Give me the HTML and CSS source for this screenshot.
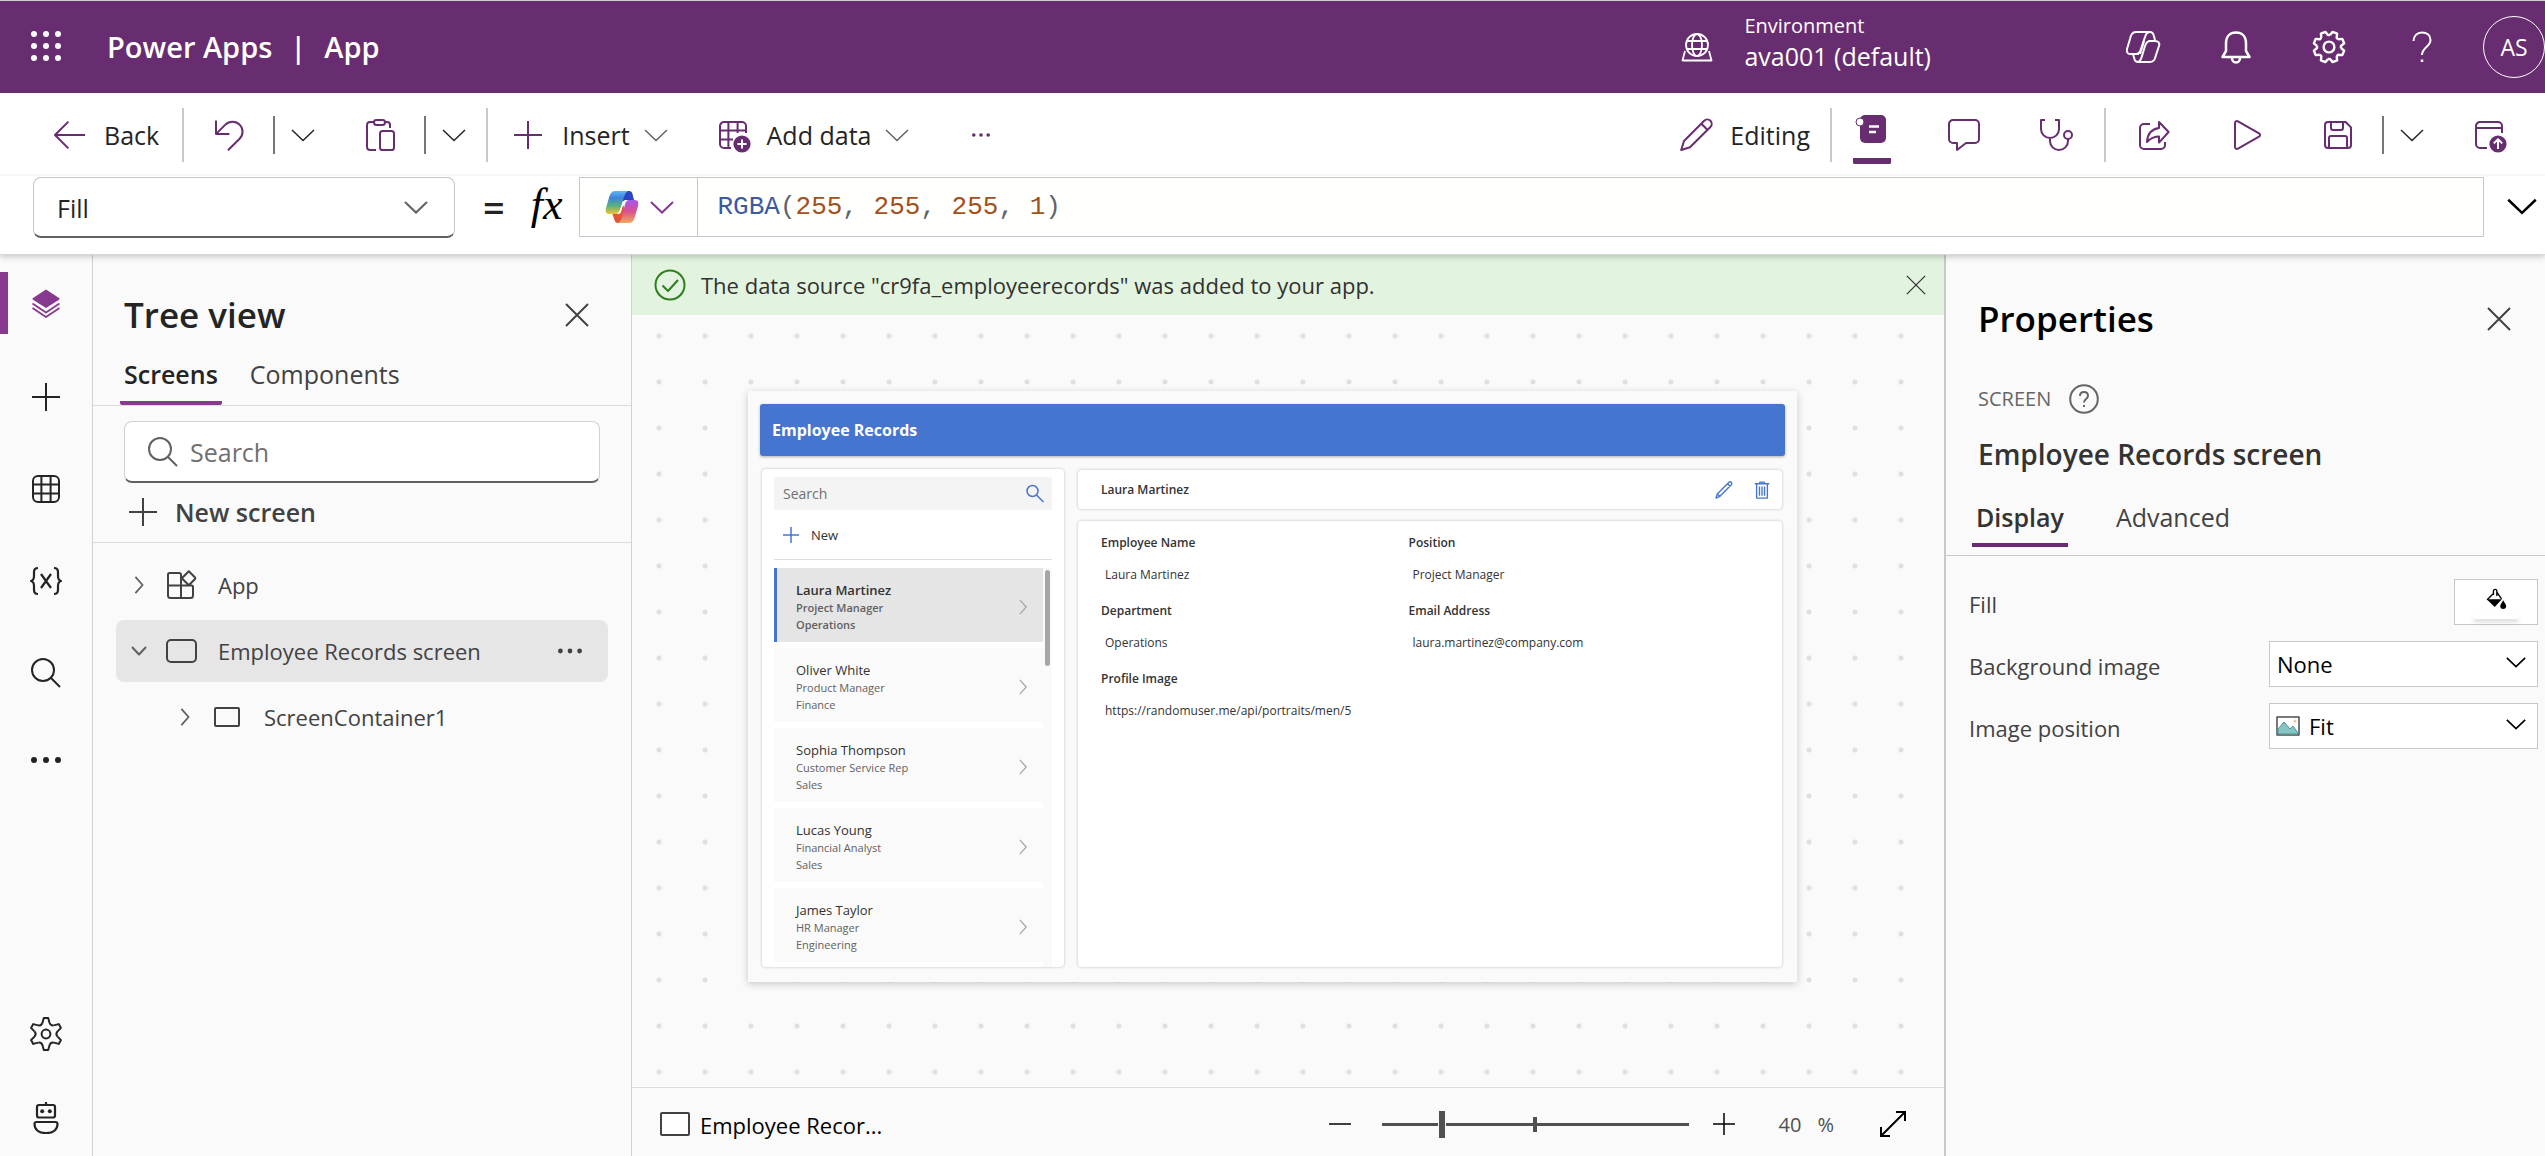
FILE: index.html
```html
<!DOCTYPE html>
<html lang="en">
<head>
<meta charset="utf-8">
<title>Power Apps | App</title>
<meta name="viewport" content="width=device-width, initial-scale=1">
<link rel="stylesheet" href="styles.css">
</head>
<body>
<svg class="sprite" aria-hidden="true">
  <symbol id="chev-down" viewBox="0 0 24 14"><path d="M1 2l11 10.500L23 2"/></symbol>
  <symbol id="chev-right" viewBox="0 0 10 20"><path d="M1 1l8 9-8 9"/></symbol>
  <symbol id="close" viewBox="0 0 24 24"><path d="M1 1l22 22M23 1L1 23"/></symbol>
  <symbol id="plus" viewBox="0 0 20 20"><path d="M10 3v14M3 10h14"/></symbol>
  <symbol id="search" viewBox="0 0 20 20"><circle cx="8.500" cy="8.500" r="5.500"/><path d="M12.500 12.500L17 17"/></symbol>
  <symbol id="dots" viewBox="0 0 20 20"><g class="solid"><circle cx="4" cy="10" r="1.500"/><circle cx="10" cy="10" r="1.500"/><circle cx="16" cy="10" r="1.500"/></g></symbol>
  <symbol id="pencil" viewBox="0 0 20 20"><path d="M17.200 2.900a2.200 2.200 0 0 0-3.100 0L4 13l-1.400 4.500L7 16.100 17.200 6a2.200 2.200 0 0 0 0-3.100zM12.700 4.400l3.100 3.100"/></symbol>
  <symbol id="tooth" viewBox="0 0 20 20"><path d="M15.700 8.200L17.700 8.800V11.200L15.700 11.800L15.300 12.800"/></symbol>
</svg>

<header class="top">
  <button class="plain waffle" aria-label="App launcher">
    <svg class="i40" viewBox="0 0 40 40"><g class="solid"><circle cx="8" cy="7" r="3"/><circle cx="20" cy="7" r="3"/><circle cx="32" cy="7" r="3"/><circle cx="8" cy="19" r="3"/><circle cx="20" cy="19" r="3"/><circle cx="32" cy="19" r="3"/><circle cx="8" cy="31" r="3"/><circle cx="20" cy="31" r="3"/><circle cx="32" cy="31" r="3"/></g></svg>
  </button>
  <div class="brand"><a href="#">Power Apps</a><span>|</span><span>App</span></div>
  <button class="plain env">
    <svg class="i40" viewBox="0 0 40 40"><g stroke-width="1.800"><circle cx="20" cy="18" r="11"/><ellipse cx="20" cy="18" rx="5" ry="11"/><path d="M10 14h20M10 22h20M8 24L5.500 33.500h29L32 24"/></g></svg>
    <span class="env-text"><small>Environment</small><b>ava001 (default)</b></span>
  </button>
  <nav class="top-icons" aria-label="Global">
    <button class="plain" aria-label="Copilot"><svg class="i40" viewBox="0 0 40 40"><g stroke-width="2"><path d="M13 5h14c2 0 3 1 3.600 3L32 13M13 5C9 5 8 8 7 12L4 22c-1 3.500 1 5 4 5h3M13 27c3 0 4-2 5-5l4-12c1-3.500 3-5 5-5"/><path d="M27 35H15c-2 0-3-1-3.600-3L10 27h6M27 35c4 0 5-3 6-7l3-9c1-3.500-1-5-4-5h-5c-3 0-4 2-5 5l-3 10c-1 4-2 6-5 6M21 14l-4 13"/></g></svg></button>
    <button class="plain" aria-label="Notifications"><svg class="i40" viewBox="0 0 40 40"><g stroke-width="2.500"><path d="M20 5.500c-6.500 0-10 4.500-10 10.500v8L6.500 30h27L30 24v-8c0-6-3.500-10.500-10-10.500z"/><path d="M16 31c0 2.500 1.500 4.500 4 4.500s4-2 4-4.500"/></g></svg></button>
    <button class="plain" aria-label="Settings"><svg class="i40" viewBox="0 0 20 20"><g stroke-width="1.200"><g transform="rotate(22.500 10 10)"><use href="#tooth"/><use href="#tooth" transform="rotate(45 10 10)"/><use href="#tooth" transform="rotate(90 10 10)"/><use href="#tooth" transform="rotate(135 10 10)"/><use href="#tooth" transform="rotate(180 10 10)"/><use href="#tooth" transform="rotate(225 10 10)"/><use href="#tooth" transform="rotate(270 10 10)"/><use href="#tooth" transform="rotate(315 10 10)"/></g><circle cx="10" cy="10" r="2.700"/></g></svg></button>
    <button class="plain" aria-label="Help"><svg class="i40" viewBox="0 0 40 40"><path stroke-width="2" d="M11.500 14c0-5 3.500-8.500 8.500-8.500s8.500 3 8.500 7.500c0 7-8.500 7-8.500 15"/><path stroke-width="2.500" d="M20 32.500V35"/></svg></button>
  </nav>
  <button class="plain avatar" aria-label="Account">AS</button>
</header>

<div class="toolbar" role="toolbar" aria-label="Commands">
  <button class="plain cmd"><svg class="i40" viewBox="0 0 20 20"><path d="M17.500 10H2.700M9.200 3.300L2.500 10l6.700 6.700"/></svg>Back</button>
  <span class="sep"></span>
  <button class="plain" aria-label="Undo"><svg class="i40" viewBox="0 0 20 20"><path d="M3.500 2.800v6.700h6.700M3.800 9.200l4.400-4.400a5 5 0 0 1 7.100 7.100L9.500 17.600"/></svg></button>
  <span class="line"></span>
  <button class="plain" aria-label="Undo options"><svg class="chev"><use href="#chev-down"/></svg></button>
  <button class="plain gap-l" aria-label="Paste"><svg class="i40" viewBox="0 0 20 20"><path d="M7 3.500H5a1.500 1.500 0 0 0-1.500 1.500v11A1.500 1.500 0 0 0 5 17.500h3M12.500 3.500h1A1.500 1.500 0 0 1 15 5v1.500"/><rect x="7" y="2.500" width="5.500" height="2.500" rx="1.200"/><rect x="10" y="8" width="7" height="9.500" rx="1.300"/></svg></button>
  <span class="line"></span>
  <button class="plain" aria-label="Paste options"><svg class="chev"><use href="#chev-down"/></svg></button>
  <span class="sep tight"></span>
  <button class="plain cmd"><svg class="i40"><use href="#plus"/></svg>Insert<svg class="chev gray"><use href="#chev-down"/></svg></button>
  <button class="plain cmd gap-l"><svg class="i40" viewBox="0 0 20 20"><path d="M16.500 9V5.500A2 2 0 0 0 14.500 3.500h-9A2 2 0 0 0 3.500 5.500v9a2 2 0 0 0 2 2H9M3.500 7.700h13M3.500 12.200H10M7.700 3.500v13M12.300 3.500V9"/><circle class="solid" cx="14.500" cy="14.500" r="4.300"/><path class="knock" d="M14.500 12.200v4.600M12.200 14.500h4.600"/></svg>Add data<svg class="chev gray"><use href="#chev-down"/></svg></button>
  <button class="plain dots wide" aria-label="More commands"><svg class="i24"><use href="#dots"/></svg></button>
  <span class="grow"></span>
  <button class="plain cmd"><svg class="i40"><use href="#pencil"/></svg>Editing</button>
  <span class="sep tight"></span>
  <button class="plain active-panel" aria-label="Properties panel"><svg class="i40" viewBox="0 0 40 40"><rect class="solid" x="8" y="6" width="26" height="28" rx="5"/><path class="knock" stroke-width="2.500" d="M17 17.500h10M17 23h7"/><circle class="ring" cx="8" cy="13" r="4"/></svg></button>
  <button class="plain wide" aria-label="Comments"><svg class="i40" viewBox="0 0 20 20"><path d="M4.500 2.500h11a2 2 0 0 1 2 2V12a2 2 0 0 1-2 2H11l-4.500 3.500V14h-2a2 2 0 0 1-2-2V4.500a2 2 0 0 1 2-2z"/></svg></button>
  <button class="plain wide" aria-label="App checker"><svg class="i40" viewBox="0 0 20 20"><path d="M4.500 2.500H2.500V7a4.500 4.500 0 0 0 9 0V2.500h-2M7 11.500v1.500a4.500 4.500 0 0 0 9 0v-1"/><circle cx="16" cy="10" r="2"/></svg></button>
  <span class="sep roomy"></span>
  <button class="plain" aria-label="Share"><svg class="i40" viewBox="0 0 20 20"><path d="M8 4.500H5a2 2 0 0 0-2 2V15a2 2 0 0 0 2 2h8.500a2 2 0 0 0 2-2v-1.500M12.500 3.500v3C9 7 6.700 9.500 6.500 13.500c2-2 3.500-2.700 6-2.700v3L17.300 8.500z"/></svg></button>
  <button class="plain wide" aria-label="Preview"><svg class="i40" viewBox="0 0 20 20"><path d="M4.500 4v12c0 .8.800 1.200 1.500.8l10.500-6c.7-.4.700-1.200 0-1.600L6 3.200C5.300 2.800 4.500 3.200 4.500 4z"/></svg></button>
  <button class="plain wide" aria-label="Save"><svg class="i40" viewBox="0 0 20 20"><path d="M5 3.500h8.800l2.700 2.700V15a1.500 1.500 0 0 1-1.500 1.500H5A1.500 1.500 0 0 1 3.500 15V5A1.500 1.500 0 0 1 5 3.500zM6.500 3.500v3a1 1 0 0 0 1 1h4a1 1 0 0 0 1-1v-3M5.500 16.500v-5a1 1 0 0 1 1-1h7a1 1 0 0 1 1 1v5"/></svg></button>
  <span class="line"></span>
  <button class="plain" aria-label="Save options"><svg class="chev"><use href="#chev-down"/></svg></button>
  <button class="plain gap-l" aria-label="Publish"><svg class="i40" viewBox="0 0 20 20"><path d="M9 16.500H5.500a2 2 0 0 1-2-2v-9a2 2 0 0 1 2-2h9a2 2 0 0 1 2 2V9M3.500 6.500h13"/><circle class="solid" cx="14.500" cy="14.500" r="4.300"/><path class="knock" d="M14.500 17v-4.800M12.400 14.200l2.100-2.100 2.100 2.100"/></svg></button>
</div>

<div class="formula">
  <div class="picker property">
    <select aria-label="Property"><option>Fill</option></select>
    <svg class="chev gray"><use href="#chev-down"/></svg>
  </div>
  <span class="equals">=</span>
  <span class="fx">fx</span>
  <div class="formula-box">
    <button class="plain copilot" aria-label="Copilot">
      <svg class="i40" viewBox="0 0 40 40">
        <defs>
          <linearGradient id="g1" x1="0" y1="0" x2="0" y2="1"><stop offset="0" stop-color="#5cb8f5"/><stop offset=".3" stop-color="#3f83dc"/><stop offset=".65" stop-color="#5bb27c"/><stop offset="1" stop-color="#f2c531"/></linearGradient>
          <linearGradient id="g2" x1="0" y1="0" x2="0" y2="1"><stop offset="0" stop-color="#a558f0"/><stop offset=".5" stop-color="#d9508f"/><stop offset="1" stop-color="#f3a95a"/></linearGradient>
        </defs>
        <path fill="#2a45c4" stroke="none" d="M22 4h5c2 0 3 1 3.500 3l1.500 6h-7c-3 0-5 1-6 4z"/>
        <path fill="#e2553a" stroke="none" d="M10 26h8l3-8 3 6-4 12h-4c-2 0-3-1-3.500-3z"/>
        <path fill="url(#g1)" stroke="none" d="M13 4h13c-2 1-3 3-4 6l-4 13c-1 2-2 4-5 4H8c-4 0-5-2-4-6l3.500-12C8.500 6 10 4 13 4z"/>
        <path fill="url(#g2)" stroke="none" d="M27 13h5c4 0 5 2 4 6l-3.500 12c-1 3-2.500 5-5.500 5H16c2-1 3-3 4-6l3-13c1-2 2-4 4-4z"/>
        <path fill="#fff" stroke="none" d="M26 13c-3 0-4 2-5 5l-2 7c-.6 1.500-1.500 2-3 2h-3c3 0 4-2 5-4l2.500-7c.8-2 2.500-3 5.500-3z"/>
      </svg>
      <svg class="chev violet"><use href="#chev-down"/></svg>
    </button>
    <code class="code"><span class="fn">RGBA</span>(<span class="num">255</span>, <span class="num">255</span>, <span class="num">255</span>, <span class="num">1</span>)</code>
  </div>
  <button class="plain expand" aria-label="Expand formula bar"><svg class="chev big"><use href="#chev-down"/></svg></button>
</div>

<main class="studio">
  <nav class="rail" aria-label="Authoring">
    <button class="plain rail-item on" aria-label="Tree view"><svg class="i40" viewBox="0 0 40 40"><path class="solid" d="M20 6.500L33 15c.8.500.8 1.200 0 1.700L20 25 7 16.700c-.8-.5-.8-1.200 0-1.700z"/><path d="M6.500 20.500L20 29.500l13.500-9M6.500 25L20 34l13.500-9" stroke-width="1.800"/></svg></button>
    <button class="plain rail-item" aria-label="Insert"><svg class="i40"><use href="#plus"/></svg></button>
    <button class="plain rail-item" aria-label="Data"><svg class="i40" viewBox="0 0 20 20"><rect x="3.500" y="3.500" width="13" height="13" rx="2.500"/><path d="M3.500 7.700h13M3.500 12.300h13M7.700 3.500v13M12.300 3.500v13"/></svg></button>
    <button class="plain rail-item" aria-label="Variables"><svg class="i40" viewBox="0 0 40 40"><path stroke-width="2.200" d="M12 7c-3 0-4 1-4 4v4c0 3-1 4.500-3 5 2 .5 3 2 3 5v4c0 3 1 4 4 4M28 7c3 0 4 1 4 4v4c0 3 1 4.500 3 5-2 .5-3 2-3 5v4c0 3-1 4-4 4M15 13l10 14M25 13L15 27"/></svg></button>
    <button class="plain rail-item" aria-label="Search"><svg class="i40"><use href="#search"/></svg></button>
    <button class="plain rail-item short" aria-label="More"><svg class="i40"><use href="#dots"/></svg></button>
    <span class="grow"></span>
    <button class="plain rail-item" aria-label="Settings"><svg class="i40" viewBox="0 0 20 20"><defs><path id="lobe" d="M8.200 4.500L8.900 2H11.100L11.800 4.500Q12.300 5.900 13.860 5.690"/></defs><use href="#lobe"/><use href="#lobe" transform="rotate(60 10 10)"/><use href="#lobe" transform="rotate(120 10 10)"/><use href="#lobe" transform="rotate(180 10 10)"/><use href="#lobe" transform="rotate(240 10 10)"/><use href="#lobe" transform="rotate(300 10 10)"/><circle cx="10" cy="10" r="2.200"/></svg></button>
    <button class="plain rail-item last" aria-label="Virtual agent"><svg class="i40" viewBox="0 0 40 40"><g stroke-width="2.200"><rect x="11" y="7" width="18" height="12.500" rx="2"/><path d="M20 4v3M10.500 24h19c1.500 0 2 .7 2 2 0 5-3.500 9-11.500 9S8.500 31 8.500 26c0-1.300.5-2 2-2z"/></g><g class="solid"><circle cx="16.200" cy="13.200" r="2"/><circle cx="23.800" cy="13.200" r="2"/></g></svg></button>
  </nav>

  <aside class="tree">
    <div class="panel-head"><h2>Tree view</h2><button class="plain" aria-label="Close tree view"><svg class="x24"><use href="#close"/></svg></button></div>
    <div class="tabs" role="tablist"><button class="plain tab on" role="tab">Screens</button><button class="plain tab" role="tab">Components</button></div>
    <label class="search"><svg class="i40"><use href="#search"/></svg><input type="search" placeholder="Search" aria-label="Search tree"></label>
    <button class="plain new-screen"><svg class="i40"><use href="#plus"/></svg>New screen</button>
    <ul class="nodes">
      <li><button class="plain node"><svg class="twist right"><use href="#chev-right"/></svg><svg class="i36" viewBox="0 0 36 36"><path d="M4 7.500c0-1 .5-1.500 1.500-1.500H15c1.500 0 2 .5 2 1.500V31M4 7.500v21C4 30 5 31 6.500 31h20c1.500 0 2.500-1 2.500-2.500V20c0-1-.5-1.500-1.500-1.500H4M24.800 4.300l6 6c.7.700.7 1.200 0 1.900l-6 6-6-6c-.7-.7-.7-1.200 0-1.900l6-6z"/></svg><span>App</span></button></li>
      <li><div class="node on"><button class="plain" aria-label="Collapse"><svg class="twist down" viewBox="0 0 16 10"><path d="M1 1l7 7.500L15 1"/></svg></button><svg class="i36" viewBox="0 0 36 36"><rect x="3" y="7" width="29" height="22" rx="4"/></svg><span>Employee Records screen</span><button class="plain more" aria-label="More actions"><svg class="i32"><use href="#dots"/></svg></button></div></li>
      <li><button class="plain node child"><svg class="twist right"><use href="#chev-right"/></svg><svg class="i36" viewBox="0 0 36 36"><rect x="5" y="9" width="24" height="18" rx="1"/></svg><span>ScreenContainer1</span></button></li>
    </ul>
  </aside>

  <section class="canvas">
    <div class="notice" role="status">
      <svg class="i40" viewBox="0 0 40 40"><circle cx="20" cy="20" r="14.500"/><path d="M12.500 20.500l5.500 5.500L28 15"/></svg>
      <p>The data source "cr9fa_employeerecords" was added to your app.</p>
      <button class="plain" aria-label="Dismiss"><svg class="x20"><use href="#close"/></svg></button>
    </div>
    <div class="stage">
      <article class="app">
        <h1 class="app-title">Employee Records</h1>
        <div class="app-body">
          <section class="card list">
            <label class="list-search"><input type="search" placeholder="Search" aria-label="Search records"><svg class="i20" viewBox="0 0 20 20"><circle cx="7.500" cy="7" r="5.500"/><path d="M11.500 11l7 7"/></svg></label>
            <button class="plain list-new"><svg class="i16" viewBox="0 0 16 16"><path d="M8 0v16M0 8h16"/></svg>New</button>
            <div class="gallery">
              <div class="rows">
                <button class="plain row on"><span class="who"><b>Laura Martinez</b><i>Project Manager</i><i>Operations</i></span><svg class="go"><use href="#chev-right"/></svg></button>
                <button class="plain row"><span class="who"><b>Oliver White</b><i>Product Manager</i><i>Finance</i></span><svg class="go"><use href="#chev-right"/></svg></button>
                <button class="plain row"><span class="who"><b>Sophia Thompson</b><i>Customer Service Rep</i><i>Sales</i></span><svg class="go"><use href="#chev-right"/></svg></button>
                <button class="plain row"><span class="who"><b>Lucas Young</b><i>Financial Analyst</i><i>Sales</i></span><svg class="go"><use href="#chev-right"/></svg></button>
                <button class="plain row"><span class="who"><b>James Taylor</b><i>HR Manager</i><i>Engineering</i></span><svg class="go"><use href="#chev-right"/></svg></button>
              </div>
              <div class="scroll"><span></span></div>
            </div>
          </section>
          <div class="detail">
            <header class="card record-head"><h3>Laura Martinez</h3>
              <button class="plain" aria-label="Edit record"><svg viewBox="0 0 20 20"><path d="M1 19l1.500-4.500L15.500 1.500c.8-.8 1.800-.8 2.600 0s.8 1.800 0 2.600L5.500 17zM14 3l3 3M2.500 14.500l3 2.500"/></svg></button>
              <button class="plain" aria-label="Delete record"><svg viewBox="0 0 20 20"><path d="M2 3h16M7.500 2.500V1.200h5V2.500M4 4v15h12V4M7.200 6v10.500M10 6v10.500M12.800 6v10.500"/></svg></button>
            </header>
            <dl class="card record">
              <div><dt>Employee Name</dt><dd>Laura Martinez</dd></div>
              <div><dt>Position</dt><dd>Project Manager</dd></div>
              <div><dt>Department</dt><dd>Operations</dd></div>
              <div><dt>Email Address</dt><dd>laura.martinez@company.com</dd></div>
              <div><dt>Profile Image</dt><dd>https://randomuser.me/api/portraits/men/5</dd></div>
            </dl>
          </div>
        </div>
      </article>
    </div>
    <footer class="status">
      <svg class="screen-ico" viewBox="0 0 30 24"><rect x="1" y="1" width="28" height="22" rx="1"/></svg>
      <span class="crumb">Employee Recor...</span>
      <span class="grow"></span>
      <button class="plain" aria-label="Zoom out"><svg class="z22" viewBox="0 0 22 22"><path d="M0 11h22"/></svg></button>
      <input class="zoom" type="range" min="0" max="100" value="19" aria-label="Zoom">
      <button class="plain" aria-label="Zoom in"><svg class="z22" viewBox="0 0 22 22"><path d="M0 11h22M11 0v22"/></svg></button>
      <span class="pct"><span>40</span><span>%</span></span>
      <button class="plain" aria-label="Fit to window"><svg class="z26" viewBox="0 0 26 26"><path d="M1 25L25 1M16 1h9v9M1 16v9h9"/></svg></button>
    </footer>
  </section>

  <aside class="props">
    <div class="panel-head"><h2>Properties</h2><button class="plain" aria-label="Close properties"><svg class="x24"><use href="#close"/></svg></button></div>
    <div class="kind">SCREEN<button class="plain" aria-label="About screens"><svg class="i30" viewBox="0 0 30 30"><circle cx="15" cy="15" r="13.800"/><path d="M11 12c0-2.500 1.600-4 4-4s4 1.500 4 3.700c0 3.300-4 3.300-4 6.800M15 21v2"/></svg></button></div>
    <h3 class="name">Employee Records screen</h3>
    <div class="tabs" role="tablist"><button class="plain tab on" role="tab">Display</button><button class="plain tab" role="tab">Advanced</button></div>
    <div class="fields">
      <span id="fill-label">Fill</span>
      <button class="swatch" aria-labelledby="fill-label"><svg viewBox="0 0 26 24"><path d="M10 8V3.500c0-3 4-3 4 0V9M10 6L2.500 13.500M14 4.500l5.500 8" stroke-width="1.600"/><path class="solid" d="M2 13h18l-8.500 9z"/><path class="solid" d="M21.500 14c2 3.500 3.500 5 3.500 7a3.500 3.500 0 0 1-7 0c0-2 1.500-3.500 3.500-7z"/></svg><i></i></button>
      <label for="bg">Background image</label>
      <div class="picker"><select id="bg"><option>None</option></select><svg class="chev small"><use href="#chev-down"/></svg></div>
      <label for="pos">Image position</label>
      <div class="picker with-pic"><svg class="pic" viewBox="0 0 24 20"><rect x="1" y="1" width="22" height="18" fill="#fff" stroke="#4d4d4d" stroke-width="1.500"/><path fill="#85c5c4" stroke="#4f9796" stroke-width="1" d="M2 18v-5l6-7 6 7 3-3 5 7v1z"/><circle cx="19" cy="5" r="1.500" fill="#f0c49c" stroke="none"/></svg><select id="pos"><option>Fit</option></select><svg class="chev small"><use href="#chev-down"/></svg></div>
    </div>
  </aside>
</main>
</body>
</html>
```
FILE: styles.css
```css
* { box-sizing: border-box; }

body {
  margin: 0;
  min-height: 100vh;
  display: flex;
  flex-direction: column;
  font: 25px/34px "Open Sans", "Noto Sans", sans-serif;
  color: #242424;
  background: #fafafa;
}

h1, h2, h3, p, ul, dl, dd { margin: 0; padding: 0; }
ul { list-style: none; }
input, select, button { font: inherit; color: inherit; }

svg {
  display: block;
  flex: none;
  fill: none;
  stroke: currentColor;
  stroke-width: 1;
  stroke-linejoin: round;
}
.sprite { position: absolute; width: 0; height: 0; }
.solid { fill: currentColor; stroke: none; }
.knock { stroke: #fff; }
.ring { fill: #fff; }

.plain {
  display: flex;
  align-items: center;
  flex: none;
  border: 0;
  padding: 0;
  background: none;
  text-align: left;
  cursor: pointer;
}
.grow { flex: 1; }

.i16 { width: 16px; height: 16px; }
.i20 { width: 20px; height: 20px; }
.i24 { width: 24px; height: 24px; }
.i30 { width: 30px; height: 30px; stroke-width: 2; }
.i32 { width: 32px; height: 32px; }
.i36 { width: 36px; height: 36px; stroke-width: 2; }
.i40 { width: 40px; height: 40px; }
.x20 { width: 20px; height: 20px; stroke-width: 1.5; }
.x24 { width: 24px; height: 24px; stroke-width: 2; color: #424242; }
.chev { width: 24px; height: 14px; stroke-width: 1.5; color: #242424; stroke-linejoin: miter; }
.chev.gray { color: #616161; }
.property .chev { stroke-width: 2; }
.chev.violet { color: #87398f; stroke-width: 2; }
.chev.big { width: 30px; height: 18px; color: #000; stroke-width: 2; }
.chev.small { width: 20px; height: 12px; color: #000; stroke-width: 2; }

/* Top bar */
.top {
  display: flex;
  align-items: center;
  height: 93px;
  padding-left: 26px;
  border-top: 1px solid #cfcfcf;
  background: #682c70;
  color: #fff;
}
.brand {
  display: flex;
  gap: 18px;
  margin-left: 41px;
  flex: 1;
  font-size: 29px;
  font-weight: 600;
}
.brand a { color: inherit; text-decoration: none; }
.env { gap: 27px; margin-right: 192px; }
.env-text { display: flex; flex-direction: column; padding-bottom: 12px; }
.env-text small { font-size: 20px; line-height: 30px; }
.env-text b { font-size: 25px; line-height: 30px; font-weight: 400; }
.top-icons { display: flex; gap: 53px; }
.avatar {
  justify-content: center;
  width: 62px;
  height: 62px;
  margin-left: 41px;
  border: 1px solid #fff;
  border-radius: 50%;
  font-size: 23px;
}

/* Command bar */
.toolbar {
  display: flex;
  align-items: center;
  height: 83px;
  padding: 0 36px 0 50px;
  background: #fff;
}
.toolbar .plain { color: #682c70; }
.cmd { gap: 14px; }
.toolbar .cmd { color: #242424; }
.cmd .i40 { color: #682c70; }
.sep { width: 2px; height: 54px; margin: 0 25px 0 23px; background: #c8c8c8; }
.sep.tight { margin: 0 20px; }
.sep.roomy { margin: 0 28px; }
.line { width: 2px; height: 38px; margin: 0 16px 0 24px; background: #767676; }
.gap-l { margin-left: 45px; }
.wide { margin-left: 52px; }
.dots { width: 40px; justify-content: center; }
.active-panel {
  height: 58px;
  padding: 0 0 12px;
  background: linear-gradient(#682c70, #682c70) bottom / 38px 6px no-repeat;
  border-radius: 3px;
}

/* Formula bar */
.formula {
  display: flex;
  height: 79px;
  padding: 1px 0 16px 33px;
  background: #fff;
  border-bottom: 1px solid #d8d8d8;
  box-shadow: 0 2px 6px rgba(0, 0, 0, .2);
  z-index: 1;
}
.picker { display: grid; align-items: center; background: #fff; border: 1px solid #c8c8c8; }
.picker > * { grid-area: 1 / 1; }
.picker .chev { justify-self: end; pointer-events: none; }
.picker select {
  width: 100%;
  height: 100%;
  border: 0;
  padding: 0 7px;
  background: none;
  appearance: none;
}
.property {
  width: 422px;
  border-radius: 8px;
  border-bottom: 2px solid #616161;
}
.property select { padding: 2px 24px 0 23px; }
.property .chev { margin-right: 26px; }
.equals { margin-left: 28px; font-size: 38px; line-height: 60px; font-weight: 600; }
.fx {
  margin-left: 26px;
  font: italic 44px/56px "Liberation Serif", serif;
  color: #000;
}
.formula-box {
  display: flex;
  flex: 1;
  height: 60px;
  margin-left: 16px;
  border: 1px solid #c8c8c8;
  background: #fffffe;
}
.copilot { gap: 8px; width: 118px; padding-left: 22px; border-right: 1px solid #c8c8c8; }
.code {
  padding-left: 20px;
  font: 26px/58px "Liberation Mono", monospace;
  color: #5f6368;
}
.fn { color: #3b5aa3; }
.num { color: #a3501a; }
.expand { padding: 0 8px 4px 23px; }

/* Work area */
.studio { display: flex; flex: 1; align-items: stretch; }

.rail {
  display: flex;
  flex-direction: column;
  width: 93px;
  border-right: 1px solid #d1d1d1;
  padding: 0 0 18px;
}
.rail-item { justify-content: center; height: 92px; color: #242424; }
.rail-item.on {
  height: 96px;
  color: #87398f;
  background: linear-gradient(#87398f, #87398f) left / 8px 62px no-repeat;
}
.rail-item.short { height: 82px; }
.rail-item.last { height: 40px; margin-top: 18px; }

.tree { width: 539px; border-right: 1px solid #d1d1d1; padding-top: 36px; }
.panel-head { display: flex; justify-content: space-between; align-items: center; }
.panel-head h2 { font-size: 35px; line-height: 48px; font-weight: 600; }
.tree .panel-head { padding: 0 42px 0 31px; }
.tabs { display: flex; gap: 24px; border-bottom: 1px solid #dcdcdc; }
.tab { padding-bottom: 9px; border-bottom: 4px solid transparent; color: #424242; }
.tab.on { font-weight: 600; color: #242424; border-color: #87398f; }
.tree .tabs { margin-top: 18px; padding-left: 27px; }
.tree .tab { padding: 0 4px 10px; }
.tree .tab.on { border-radius: 2px; }

.search {
  display: flex;
  align-items: center;
  gap: 7px;
  height: 62px;
  margin: 15px 31px 0;
  padding: 0 18px;
  border: 1px solid #d1d1d1;
  border-bottom: 2px solid #616161;
  border-radius: 8px;
  background: #fff;
  color: #616161;
}
.search input, .list-search input {
  flex: 1;
  min-width: 0;
  border: 0;
  padding: 0;
  background: none;
  outline: 0;
}
input::placeholder { color: #707070; opacity: 1; }
.new-screen {
  gap: 12px;
  width: 100%;
  height: 60px;
  padding: 0 0 2px 30px;
  border-bottom: 1px solid #dcdcdc;
  font-weight: 600;
  color: #424242;
}
.nodes { display: grid; gap: 4px; padding: 11px 23px; font-size: 22px; }
.node {
  display: flex;
  align-items: center;
  width: 100%;
  height: 62px;
  padding-left: 15px;
  border-radius: 8px;
  color: #424242;
}
.node.on { background: #e6e6e6; }
.node.child { padding-left: 61px; }
.node .i36 { margin: 0 18px 0 17px; }
.twist { stroke-width: 2; width: 16px; height: 10px; color: #616161; }
.twist.right { height: 18px; }
.more { margin: 0 22px 0 auto; }
.node span { white-space: nowrap; }

.canvas { display: flex; flex-direction: column; flex: 1; min-width: 0; }
.notice {
  display: flex;
  align-items: center;
  height: 62px;
  padding: 0 18px;
  background: #e2f4df;
  border-bottom: 2px solid #fff;
  font-size: 22px;
  color: #323130;
}
.notice .i40 { stroke-width: 2; color: #2f7d1e; }
.notice p { flex: 1; margin-left: 11px; }
.stage {
  flex: 1;
  padding: 74px 147px 40px 116px;
  background: radial-gradient(circle, #e0e0e0 2px, transparent 3px) 4px -4px / 46px 46px;
}
.app {
  display: flex;
  flex-direction: column;
  aspect-ratio: 1049 / 591;
  padding: 13px 12px 15px;
  background: #fafafa;
  box-shadow: 0 2px 8px rgba(0, 0, 0, .2);
  font-size: 13px;
  line-height: 20px;
}
.app-title {
  padding-left: 12px;
  border-radius: 3px;
  background: #4675cf;
  color: #fff;
  font-size: 16px;
  line-height: 52px;
  font-weight: 700;
  box-shadow: 0 1px 3px rgba(0, 0, 0, .3);
}
.app-body { display: flex; flex: 1; gap: 14px; min-height: 0; margin-top: 13px; padding: 0 3px 0 2px; }
.card { border-radius: 4px; background: #fff; box-shadow: 0 0 3px rgba(0, 0, 0, .25); }
.list { display: flex; flex-direction: column; width: 302px; padding: 8px 12px 0; }
.list-search {
  display: flex;
  align-items: center;
  height: 33px;
  padding: 0 7px 0 9px;
  background: #f4f4f4;
  font-size: 14px;
}
.list .i20, .list .i16 { color: #4675cf; stroke-width: 1.5; }
.list-new {
  gap: 12px;
  height: 50px;
  padding-left: 9px;
  border-bottom: 1px solid #dedede;
  color: #333;
}
.gallery { display: flex; flex: 1; min-height: 0; margin-top: 8px; background: #fafafa; overflow: hidden; }
.rows { display: grid; flex: 1; gap: 6px; align-content: start; background: #fff; }
.row {
  height: 74px;
  padding: 4px 16px 0 22px;
  background: #fafafa;
  color: #333;
}
.row.on { padding-left: 19px; border-left: 3px solid #4675cf; background: #e5e5e5; }
.who { display: flex; flex-direction: column; flex: 1; }
.who b { font-weight: 400; font-size: 13px; line-height: 18px; }
.who i { font-style: normal; font-size: 11px; line-height: 17px; color: #616161; }
.row.on b, .row.on i { font-weight: 600; }
.go { width: 8px; height: 16px; color: #a6a6a6; stroke-width: 1.5; }
.scroll { width: 9px; padding: 2px 2px 0; }
.scroll span { display: block; height: 96px; border-radius: 3px; background: #a6a6a6; }

.detail { display: flex; flex-direction: column; flex: 1; gap: 12px; margin-top: 1px; }
.record-head {
  display: flex;
  align-items: center;
  gap: 20px;
  height: 39px;
  padding: 0 11px 0 23px;
  color: #4675cf;
}
.record-head h3 { flex: 1; font-size: 12px; font-weight: 600; color: #333; }
.record-head svg { stroke-width: 1.5; width: 18px; height: 18px; }
.record {
  display: grid;
  grid-template-columns: 1fr 1fr;
  align-content: start;
  gap: 16px 0;
  flex: 1;
  padding: 12px 66px 0 23px;
  color: #333;
}
.record div { display: grid; gap: 12px; min-width: 0; }
.record dt { font-weight: 600; font-size: 12px; }
.record dd { padding-left: 4px; font-size: 12px; white-space: nowrap; }

.status {
  display: flex;
  align-items: center;
  height: 69px;
  padding: 4px 38px 0 28px;
  border-top: 1px solid #dcdcdc;
  background: #fafafa;
  font-size: 22px;
  color: #000;
}
.screen-ico { width: 30px; height: 24px; stroke-width: 2; color: #424242; fill: #fff; margin-right: 10px; }
.crumb { padding-top: 2px; }
.z22 { width: 22px; height: 22px; stroke-width: 1.5; }
.z26 { width: 26px; height: 26px; stroke-width: 2; stroke-linejoin: miter; }
.zoom {
  width: 307px;
  height: 27px;
  margin: 0 24px 0 31px;
  appearance: none;
  background:
    linear-gradient(#505050, #505050) center / 4px 15px no-repeat,
    linear-gradient(#505050, #505050) center / 100% 3px no-repeat;
}
.zoom::-webkit-slider-thumb {
  appearance: none;
  width: 8px;
  height: 27px;
  border: solid #fafafa;
  border-width: 0 1px;
  background: #505050;
}
.pct { display: flex; gap: 16px; margin: 0 46px 0 44px; padding-top: 2px; font-size: 20px; color: #505050; }

.props { width: 601px; border-left: 2px solid #c8c8c8; padding-top: 40px; }
.props .panel-head { padding: 0 34px 0 32px; color: #000; }
.kind {
  display: flex;
  align-items: center;
  gap: 18px;
  height: 30px;
  margin: 41px 0 0 32px;
  font-size: 20px;
  color: #666;
}
.name { margin: 20px 0 0 32px; font-size: 28px; line-height: 40px; font-weight: 600; color: #333; }
.props .tabs { gap: 44px; margin-top: 26px; padding: 0 26px 8px; border-color: #c8c8c8; }
.props .tab { padding: 0 4px 9px; }
.props .tab.on { border-color: #682c70; color: #333; }
.fields {
  display: grid;
  grid-template-columns: 1fr 269px;
  grid-auto-rows: 46px;
  gap: 16px 0;
  align-items: center;
  padding: 23px 7px 23px 23px;
  font-size: 22px;
  color: #424242;
}
.fields label, .fields span { padding-top: 3px; }
.fields .picker { height: 46px; color: #000; }
.fields .picker .chev { margin: 0 11px 4px 0; }
.fields .with-pic select { padding-left: 39px; }
.pic { width: 24px; height: 20px; margin-left: 6px; }
.swatch {
  display: flex;
  flex-direction: column;
  align-items: center;
  justify-self: end;
  gap: 4px;
  width: 84px;
  height: 46px;
  padding: 7px 0 0;
  border: 1px solid #c8c8c8;
  background: #fff;
  color: #000;
}
.swatch svg { width: 22px; height: 23px; }
.swatch i { width: 44px; height: 5px; background: #fff; box-shadow: 0 3px 4px rgba(0, 0, 0, .15); }
```
